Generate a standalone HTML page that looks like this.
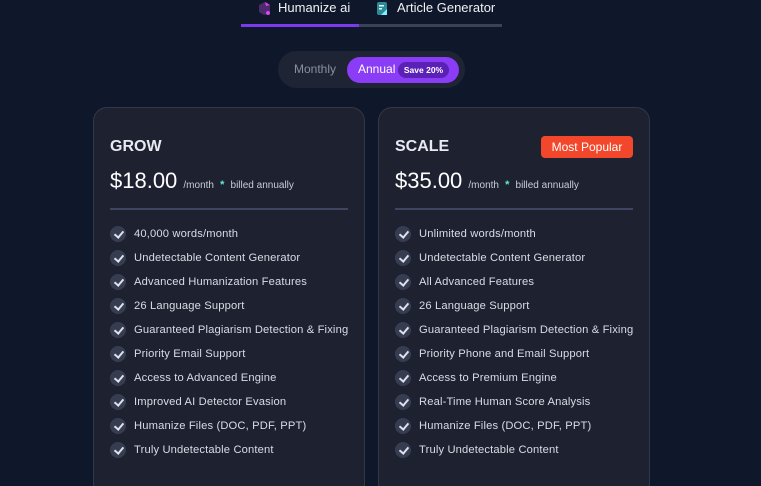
<!DOCTYPE html>
<html style="width:761px;height:486px;overflow:hidden"><head><meta charset="utf-8"><style>
*{margin:0;padding:0;box-sizing:border-box}
body{width:761px;height:486px;overflow:hidden;background:#0f172a;font-family:"Liberation Sans",sans-serif;color:#e5e7ef;position:relative}
.tab{position:absolute;top:0;font-size:13px;color:#f1f2f6;line-height:16px}
.line{position:absolute;top:24px;height:3px}
.toggle{position:absolute;left:278px;top:51px;width:187px;height:37px;border-radius:19px;background:#1e2433}
.mon{position:absolute;left:294px;top:62px;font-size:12px;color:#8a90a0}
.ann{position:absolute;left:347px;top:57px;width:112px;height:26px;border-radius:13px;background:#8b3cf6;color:#fff;font-size:12px}
.ann span.t{position:absolute;left:11px;top:5px}
.badge{position:absolute;left:51px;top:5px;width:51px;height:16px;border-radius:8px;background:#5b21b6;font-size:8.5px;font-weight:bold;text-align:center;line-height:16px}
.card{position:absolute;top:107px;width:272px;height:400px;background:#1e2130;border:1px solid #323849;border-radius:14px}
.title{position:absolute;left:16px;top:30px;font-size:16px;font-weight:bold;color:#e8eaf2}
.price{position:absolute;left:16px;top:60px;font-size:22px;color:#fff;white-space:nowrap}
.price small{font-size:10px;color:#c8ccd8}
.price b{color:#5eead4;font-size:11px}
.div{position:absolute;left:16px;top:100px;width:238px;height:2px;background:#3f4560}
ul{position:absolute;left:16px;top:118px;list-style:none}
li{height:24px;font-size:11.2px;color:#d9dce6;position:relative;padding-left:24px;line-height:16px;white-space:nowrap;letter-spacing:.15px}
li:before{content:"";position:absolute;left:0;top:0;width:16px;height:16px;border-radius:50%;background:#373d50}
li:after{content:"";position:absolute;left:5.5px;top:3px;width:4px;height:7px;border:solid #dfe2ee;border-width:0 2px 2px 0;transform:rotate(40deg)}
.pop{position:absolute;left:162px;top:28px;width:92px;height:22px;border-radius:4px;background:#f2472b;color:#fff;font-size:12px;text-align:center;line-height:22px}
</style></head><body>
<svg style="position:absolute;left:257px;top:1px" width="14" height="15"><path d="M2 4L8 1L13 4V12L7 14L2 11Z" fill="#4c2a6e"/><path d="M8 1L13 4L9 5Z" fill="#d946ef"/><circle cx="11" cy="12" r="2" fill="#d946ef"/></svg>
<div class="tab" style="left:278px">Humanize ai</div>
<svg style="position:absolute;left:376px;top:1px" width="12" height="16"><rect x="1" y="1" width="10" height="13" rx="2" fill="#2d8a96"/><rect x="3" y="4" width="5" height="1.5" fill="#e0fbff"/><rect x="3" y="7" width="3" height="1.5" fill="#e0fbff"/><path d="M5 14L11 8V14Z" fill="#7ef0ff"/></svg>
<div class="tab" style="left:397px">Article Generator</div>
<div class="line" style="left:241px;width:261px;background:#3a4258"></div>
<div class="line" style="left:241px;width:118px;background:#7c3aed"></div>
<div class="toggle"></div>
<div class="mon">Monthly</div>
<div class="ann"><span class="t">Annual</span><div class="badge">Save 20%</div></div>

<div class="card" style="left:93px">
<div class="title">GROW</div>
<div class="price">$18.00 <small>/month</small> <b>*</b> <small>billed annually</small></div>
<div class="div"></div>
<ul><li>40,000 words/month</li><li>Undetectable Content Generator</li><li>Advanced Humanization Features</li><li>26 Language Support</li><li>Guaranteed Plagiarism Detection &amp; Fixing</li><li>Priority Email Support</li><li>Access to Advanced Engine</li><li>Improved AI Detector Evasion</li><li>Humanize Files (DOC, PDF, PPT)</li><li>Truly Undetectable Content</li></ul>
</div>
<div class="card" style="left:378px">
<div class="title">SCALE</div>
<div class="pop">Most Popular</div>
<div class="price">$35.00 <small>/month</small> <b>*</b> <small>billed annually</small></div>
<div class="div"></div>
<ul><li>Unlimited words/month</li><li>Undetectable Content Generator</li><li>All Advanced Features</li><li>26 Language Support</li><li>Guaranteed Plagiarism Detection &amp; Fixing</li><li>Priority Phone and Email Support</li><li>Access to Premium Engine</li><li>Real-Time Human Score Analysis</li><li>Humanize Files (DOC, PDF, PPT)</li><li>Truly Undetectable Content</li></ul>
</div>
</body></html>
